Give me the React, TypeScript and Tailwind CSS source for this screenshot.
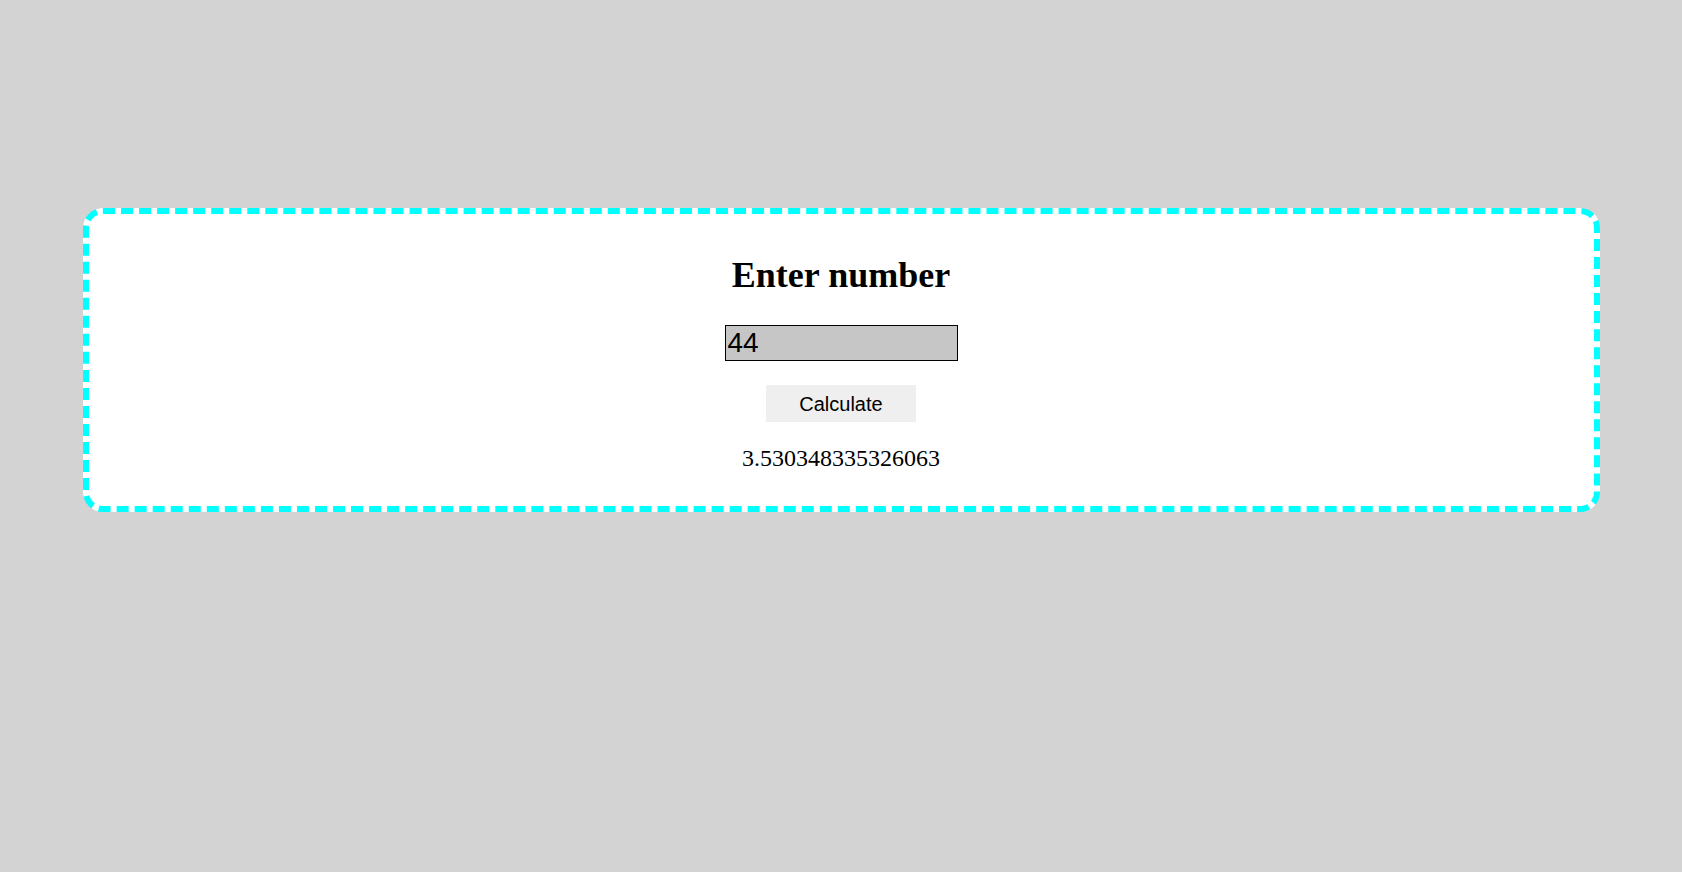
import React, { useState } from "react";

const App = () => {
	const [value, setValue] = useState("44");
	const [result, setResult] = useState("3.530348335326063");

	const calculate = () => {
		const n = parseFloat(value);
		if (!isNaN(n)) setResult(String(Math.cbrt(n)));
	};

	return (
		<main className="min-h-screen w-full bg-[#d3d3d3] pt-[208px] font-['Liberation_Serif',serif]">
			<div className="mx-auto flex w-[1517px] flex-col items-center rounded-[20px] border-[6px] border-dashed border-[#00ffff] bg-white pt-[41px] pb-[34px]">
				<h1 className="text-[36px] leading-[40px] font-bold text-black">
					Enter number
				</h1>
				<input
					type="text"
					value={value}
					onChange={(e) => setValue(e.target.value)}
					className="mt-[30px] h-[36px] w-[233px] border border-black bg-[#c6c6c6] px-[2px] font-['Liberation_Sans',sans-serif] text-[28px] leading-[32px] text-black outline-none"
				/>
				<button
					onClick={calculate}
					className="mt-[24px] h-[37px] w-[150px] bg-[#efefef] font-['Liberation_Sans',sans-serif] text-[20px] text-black"
				>
					Calculate
				</button>
				<p className="mt-[22px] text-[24px] leading-[28px] text-black">{result}</p>
			</div>
		</main>
	);
};

export default App;
